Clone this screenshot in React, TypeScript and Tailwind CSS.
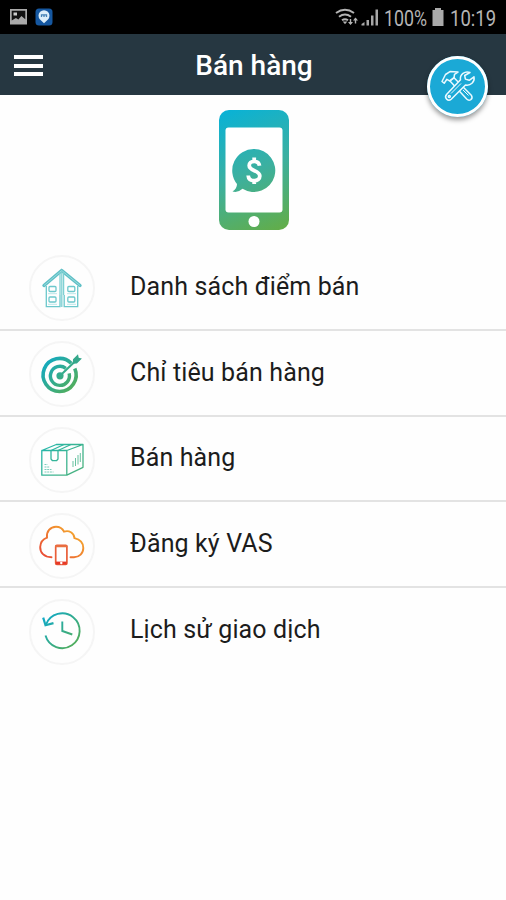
import type { ReactNode } from "react";

function Gradient({ id, from = "#08a9d3", to = "#5fae46" }: { id: string; from?: string; to?: string }) {
  return (
    <defs>
      <linearGradient id={id} x1="12" y1="14" x2="52" y2="52" gradientUnits="userSpaceOnUse">
        <stop offset="0" stopColor={from} />
        <stop offset="1" stopColor={to} />
      </linearGradient>
    </defs>
  );
}

function HouseIcon() {
  return (
    <svg viewBox="0 0 66 66" className="size-full" fill="none" stroke="#6cc8cc" strokeWidth="1.3">
      <path d="M32.7 15.5 15 30.5M32.7 15.5 51 30.5" stroke="#5fc0c6" strokeWidth="3.4" strokeLinecap="round" />
      <path d="M32.7 15.5 15 30.5M32.7 15.5 51 30.5" stroke="#a8dfe2" strokeWidth="0.8" />
      <path d="M17.3 31v20.7H31V40M48.7 31v20.7H35.2V40" />
      <path d="M31 17v23M34.6 17v23M32.8 16v36" stroke="#7fd0d3" />
      <rect x="20" y="31.5" width="7" height="5" rx="1" />
      <rect x="38.8" y="31.5" width="7" height="5" rx="1" />
      <rect x="20" y="42" width="7" height="5" rx="1" />
      <rect x="38.8" y="42" width="7" height="5" rx="1" />
      <path d="M19 38.7h9M38 38.7h9M19 49.3h9M38 49.3h9" stroke="#a8dfe2" strokeWidth="0.8" />
    </svg>
  );
}

function TargetIcon() {
  return (
    <svg viewBox="0 0 66 66" className="size-full" fill="none" stroke="url(#target)">
      <Gradient id="target" />
      <path d="M42.2 22.2A16.5 16.5 0 1 0 45.8 27.5" strokeWidth="3.6" />
      <path d="M36.8 27.4A9.5 9.5 0 1 0 40.1 32.4" strokeWidth="3.4" />
      <circle cx="31" cy="34.8" r="3.6" fill="url(#target)" stroke="none" />
      <path d="M31 34.8 48 18.5" strokeWidth="2.1" />
      <path d="m43.8 22.7.2-4.4 5-5 .7 3.5 3.2.8-5 5z" fill="#35a88b" stroke="none" />
    </svg>
  );
}

function BoxIcon() {
  return (
    <svg viewBox="0 0 66 66" className="size-full" fill="none" stroke="url(#box)" strokeWidth="1.3" strokeLinejoin="round">
      <Gradient id="box" from="#20b7b0" to="#4fb179" />
      <path d="M12.8 23.5h25v24.7h-25zM12.8 23.5l14.5-6H54L37.8 23.5M54 17.5v22.8l-16.2 7.9" />
      <path d="m22 23.5 13-6M29 23.5l13-6M22 23.5V32l1.5 1.7h4L29 32v-8.5" />
      <path d="M15.5 37.5h3M15.5 40h5M15.5 42.5h7M15.5 45h9" strokeWidth="1" strokeDasharray="2 .7" opacity=".65" />
      <path d="M44 34v6M46.5 31v8M49 28v9.5M51.3 26v9" strokeWidth="1" opacity=".8" />
    </svg>
  );
}

function CloudPhoneIcon() {
  return (
    <svg viewBox="0 0 66 66" className="size-full" fill="none" stroke="url(#cloud)" strokeWidth="1.9" strokeLinecap="round">
      <defs>
        <linearGradient id="cloud" x1="20" y1="48" x2="46" y2="18" gradientUnits="userSpaceOnUse">
          <stop offset="0" stopColor="#e94c35" />
          <stop offset="1" stopColor="#f4a52d" />
        </linearGradient>
      </defs>
      <path d="M22.5 44.2C15 44 11 39.5 11.2 34c.2-4.5 2.8-7.8 6.8-9.3-.8-6 3.3-11 9-11 3.5 0 6.5 1.8 8 5 5-1.7 10 1 10.5 6.5C51 26.5 54.3 30 54.3 35c0 5.5-4 9-9.3 9.3h-3.5" />
      <rect x="26.7" y="32.3" width="11.2" height="19.2" rx="1.2" stroke="#e95e38" strokeWidth="1.7" />
      <path d="M27 33.2h10.5" stroke="#e97140" strokeWidth="2" />
      <path d="M26.8 50h10.9" stroke="#e73828" strokeWidth="2.8" strokeLinecap="butt" />
      <circle cx="32.3" cy="50" r="1.2" fill="white" stroke="none" />
    </svg>
  );
}

function HistoryIcon() {
  return (
    <svg viewBox="0 0 66 66" className="size-full" fill="none" stroke="url(#history)" strokeWidth="1.9">
      <Gradient id="history" />
      <path d="M17 25.5A17.4 17.4 0 1 1 16.5 36.5" />
      <path d="m14.2 18.6 2.3 7.6 8-2.1" strokeWidth="2.2" />
      <path d="M33.3 22.5V32l10 3.5" />
    </svg>
  );
}

function ToolsIcon() {
  return (
    <svg viewBox="0 0 61 61" className="size-full" fill="none" stroke="#e9f9ff" strokeWidth="1.5" strokeLinejoin="round">
      <path d="M15 25.5 18.5 18.5 23 15.6l8 .5-3.5 2.2-.5 3.5-4.5 3-2.6-1.5-2.7 3.9z" />
      <path d="m23 25 4-3.3 17.5 17.8q1.5 2.8-1 4.3-2 1-3.8-.8z" />
      <path d="M43 16.5c-5-2-10.5 1.8-9.5 7.3L19.5 38.5c-2.7 3.3 1.5 7.5 4.7 4.7L38.5 29c5 1 9.5-3 8.5-8.2l-4.8 3.5-3.8-1.2-.7-3.6z" fill="#1ba9d6" />
      <path d="m24 37.5 10-10" strokeWidth="1" />
      <circle cx="22.3" cy="40.5" r="1" />
      <path d="m36 34 5.5 5.5" strokeWidth="1" />
    </svg>
  );
}

function PaymentPhone() {
  return (
    <svg viewBox="0 0 72 122" className="h-[122px] w-[72px]">
      <defs>
        <linearGradient id="phone" x1="10" y1="0" x2="60" y2="122" gradientUnits="userSpaceOnUse">
          <stop offset="0" stopColor="#09b2d6" />
          <stop offset="0.5" stopColor="#3bb0a1" />
          <stop offset="1" stopColor="#62ad49" />
        </linearGradient>
      </defs>
      <rect x="1" y="1" width="70" height="120" rx="10" fill="url(#phone)" />
      <rect x="7.5" y="18.5" width="57" height="85" rx="3" fill="white" />
      <circle cx="36" cy="112.5" r="5.5" fill="white" />
      <path d="M36 40a21.500 21.500 0 1 1-11.500 39.800Q20 84 14.500 82.500q4.500-3 4.500-7.500A21.500 21.500 0 0 1 36 40z" fill="url(#phone)" />
      <path d="M41.500 56.800c-.4-3-2.500-4.500-5.300-4.500-3 0-5 1.600-5 4.100 0 6 10.600 4.500 10.600 10.600 0 3-2.500 4.700-5.600 4.700-3.500 0-5.800-1.900-6-5.200M36.200 48.500v4M36.200 71v4" fill="none" stroke="white" strokeWidth="3.8" />
    </svg>
  );
}

function StatusBar() {
  return (
    <div className="flex h-[34px] items-center bg-black pr-2.5 pl-2.5 text-[#b4b4b4]">
      <svg viewBox="0 0 18 18" className="size-[18px]">
        <rect x="0" y="1" width="17" height="15.5" fill="#aaa" />
        <path d="M1.7 2.7h13.600v8.500l-3.900-3.200-3 3.500-2.500-1.500-4.200 2.500z" fill="#111" />
        <rect x="3.5" y="4.5" width="3.5" height="3" fill="#ccc" />
      </svg>
      <svg viewBox="0 0 18 18" className="ml-[7px] size-[18px]">
        <rect x=".5" y=".5" width="17" height="17" rx="3.5" fill="#1557a0" />
        <path d="M9 15.300 5 11.500a5.500 5.500 0 1 1 8 0z" fill="#dceefa" />
        <path d="M6.500 9V6.800h5V9M9 7v2" fill="none" stroke="#4380b5" strokeWidth="1.3" />
      </svg>
      <svg viewBox="0 0 24 20" className="ml-auto h-5 w-6" fill="none" stroke="currentColor" strokeWidth="2">
        <path d="M1 6q9-6.500 18 0M4 9.800q6-4.500 12 0M7 13.300q3-2.200 6 0" />
        <path d="M7.700 14.500h4.600l-2.300 2.800z" fill="currentColor" stroke="none" />
        <path d="M15.500 17v-5M20.500 11.500v5" strokeWidth="1.4" />
        <path d="m13 15 2.500 3 2.500-3zM18 13.500l2.500-3 2.500 3z" fill="currentColor" stroke="none" />
      </svg>
      <svg viewBox="0 0 19 18" className="ml-0.5 h-[18px] w-[19px]" fill="#a7a7a7">
        <path d="M.5 17.500v-1.500l3-2v3.500zM5.500 12H8v5.500H5.500zM10 7.500h2.500v10H10zM14.500 1.500H17v16h-2.500z" />
      </svg>
      <div className="ml-1 flex h-[34px] w-12 items-center">
        <span className="origin-left scale-x-[.81] pt-[3px] text-[22px] leading-none">100%</span>
      </div>
      <svg viewBox="0 0 12 18" className="h-[18px] w-3" fill="#aaa">
        <path d="M3 0h6v2h2.500v16H.5V2H3z" />
      </svg>
      <div className="ml-1.5 flex h-[34px] w-[46px] items-center">
        <span className="origin-left scale-x-[.84] pt-[3px] text-[22px] leading-none">10:19</span>
      </div>
    </div>
  );
}

const items: { label: string; icon: ReactNode }[] = [
  { label: "Danh sách điểm bán", icon: <HouseIcon /> },
  { label: "Chỉ tiêu bán hàng", icon: <TargetIcon /> },
  { label: "Bán hàng", icon: <BoxIcon /> },
  { label: "Đăng ký VAS", icon: <CloudPhoneIcon /> },
  { label: "Lịch sử giao dịch", icon: <HistoryIcon /> },
];

export default function App() {
  return (
    <div className="h-[900px] w-[506px] overflow-hidden bg-[#fefefe] font-['Roboto',sans-serif]">
      <StatusBar />
      <header className="relative flex h-[61px] items-center justify-center bg-[#263741]">
        <button aria-label="Menu" className="absolute top-[21px] left-[14px] flex w-[29px] flex-col gap-[4.5px]">
          <span className="h-1 bg-white" />
          <span className="h-1 bg-white" />
          <span className="h-1 bg-white" />
        </button>
        <h1 className="pt-[3px] pl-0.5 text-[28px] leading-none font-medium text-white">Bán hàng</h1>
        <button aria-label="Công cụ" className="absolute top-[22px] left-[427px] size-[61px] rounded-full bg-[#1ba9d6] shadow-[inset_0_0_0_3px_#fff,0_3px_5px_#0006]">
          <ToolsIcon />
        </button>
      </header>
      <main>
        <div className="flex h-[150px] justify-center pt-3.5 pl-px">
          <PaymentPhone />
        </div>
        <ul>
          {items.map((item) => (
            <li key={item.label} className="flex h-[85.8px] items-center border-b-2 border-[#e3e3e3] pl-[29px] last:border-transparent">
              <div className="mt-[3px] size-[66px] rounded-full border-2 border-[#f5f5f5]">
                <div className="-m-0.5 size-[66px]">{item.icon}</div>
              </div>
              <span className="ml-[35px] text-[25px] leading-8 tracking-[.13px] whitespace-nowrap text-[#1c1c1c]">{item.label}</span>
            </li>
          ))}
        </ul>
      </main>
    </div>
  );
}
